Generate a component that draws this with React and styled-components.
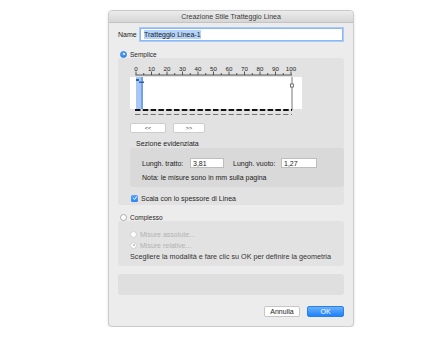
import styled, { createGlobalStyle } from 'styled-components';

const GlobalStyle = createGlobalStyle`
    body {
        margin: 0;
        background: #ffffff;
        font-family: "Liberation Sans", Arial, sans-serif;
        color: #222;
    }
`

const Page = styled.div`
    padding: 10px 0 0 108px;
`
const Dialog = styled.div`
    width: 246px;
    height: 317px;
    box-sizing: border-box;
    background-color: #ececec;
    border: 1px solid #cbcbcb;
    border-radius: 4px;
    box-shadow: 0 1px 3px rgba(0, 0, 0, 0.12);
    display: flex;
    flex-direction: column;
    overflow: hidden;
`
const TitleBar = styled.div`
    height: 12px;
    flex-shrink: 0;
    box-sizing: border-box;
    background: linear-gradient(#ececec, #d6d6d6);
    border-bottom: 1px solid #c2c2c2;
    display: flex;
    align-items: center;
    justify-content: center;
    font-size: 7px;
    color: #3a3a3a;
`
const Body = styled.div`
    flex: 1;
    padding: 5px 9px 0 9px;
    display: flex;
    flex-direction: column;
`
const NameRow = styled.div`
    height: 13px;
    display: flex;
    align-items: center;
    font-size: 7px;
`
const NameLabel = styled.span`
    width: 22px;
`
const NameInput = styled.div`
    width: 203px;
    height: 13px;
    box-sizing: border-box;
    background: #fff;
    border: 1px solid #8ab8f4;
    box-shadow: 0 0 0 1px #a9cbf6;
    display: flex;
    align-items: center;
    padding-left: 3px;
    font-size: 7px;
`
const Selected = styled.span`
    background: #b4d3fb;
    padding: 1px 0;
`
const OptionRow = styled.div`
    height: 8px;
    display: flex;
    align-items: center;
    gap: 3px;
    margin-top: ${props => props.$top || 0}px;
    margin-left: ${props => props.$left || 0}px;
    font-size: ${props => props.$size || 7}px;
    color: ${props => props.$disabled ? '#b2b2b2' : '#262626'};
`
const Radio = styled.span`
    width: 7px;
    height: 7px;
    box-sizing: border-box;
    border-radius: 50%;
    flex-shrink: 0;
    display: flex;
    align-items: center;
    justify-content: center;
    background: ${props => props.$on ? 'linear-gradient(#5aa5fb, #2d86f5)' : '#fff'};
    border: 1px solid ${props => props.$on ? '#2f7fe0' : props.$disabled ? '#cfcfcf' : '#a9a9a9'};
    &::after {
        content: '';
        display: ${props => props.$dot ? 'block' : 'none'};
        width: 2px;
        height: 2px;
        border-radius: 50%;
        background: ${props => props.$on ? '#fff' : '#b8b8b8'};
    }
`
const CheckBox = styled.span`
    width: 7px;
    height: 7px;
    border-radius: 1.5px;
    background: linear-gradient(#5aa5fb, #2d86f5);
    display: flex;
    align-items: center;
    justify-content: center;
    flex-shrink: 0;
`
const Panel = styled.div`
    background-color: ${props => props.$tone || '#e2e2e2'};
    border-radius: 3px;
    display: flex;
    flex-direction: column;
    margin-top: ${props => props.$top || 0}px;
    margin-left: ${props => props.$left || 0}px;
    height: ${props => props.$height}px;
    box-sizing: border-box;
    padding: ${props => props.$pad || '0'};
`
const Preview = styled.svg`
    display: block;
    margin-left: 12px;
`
const ArrowRow = styled.div`
    display: flex;
    gap: 7px;
    margin: 7px 0 0 12px;
`
const SmallButton = styled.div`
    width: ${props => props.$w}px;
    height: 10px;
    box-sizing: border-box;
    background: #fff;
    border: 1px solid #cdcdcd;
    border-radius: 2px;
    display: flex;
    align-items: center;
    justify-content: center;
    font-size: 5.5px;
    color: #333;
`
const SectionTitle = styled.div`
    height: 8px;
    line-height: 8px;
    margin: 7px 0 0 18px;
    font-size: 7px;
`
const FieldRow = styled.div`
    display: flex;
    align-items: center;
    height: 10px;
    font-size: 7px;
`
const FieldLabel = styled.span`
    width: 48px;
    margin-left: ${props => props.$left || 0}px;
`
const Field = styled.div`
    width: ${props => props.$w}px;
    height: 10px;
    box-sizing: border-box;
    background: #fff;
    border: 1px solid #bdbdbd;
    font-size: 7px;
    display: flex;
    align-items: center;
    padding-left: 2px;
`
const Note = styled.div`
    height: 8px;
    line-height: 8px;
    margin-top: 6px;
    font-size: 7px;
`
const Hint = styled.div`
    height: 8px;
    line-height: 8px;
    margin-top: 4px;
    font-size: 7.2px;
    color: #333;
`
const Footer = styled.div`
    display: flex;
    justify-content: flex-end;
    gap: 7px;
    margin-top: 11px;
`
const DialogButton = styled.div`
    width: ${props => props.$w}px;
    height: 11px;
    box-sizing: border-box;
    border-radius: 2px;
    display: flex;
    align-items: center;
    justify-content: center;
    font-size: 7px;
    background: ${props => props.$primary ? 'linear-gradient(#69b1fb, #1c82fa)' : '#fff'};
    color: ${props => props.$primary ? '#fff' : '#222'};
    border: 1px solid ${props => props.$primary ? '#2a80ea' : '#c6c6c6'};
`

const labels = [0, 10, 20, 30, 40, 50, 60, 70, 80, 90, 100];

function DashPreview() {
    const step = 15.5;
    const ticks = [];
    for (let i = 0; i <= 20; i++) {
        const x = 6 + i * step / 2;
        const major = i % 2 === 0;
        ticks.push(<line key={i} x1={x} x2={x} y1={major ? 7.5 : 9} y2={11} stroke="#333" strokeWidth="0.8" />);
    }
    return (
        <Preview width="172" height="52" viewBox="0 0 172 52">
            {labels.map((n, i) => (
                <text key={n} x={6 + i * step} y="6.5" fontSize="6.2" textAnchor="middle" fill="#222"
                    fontFamily="Liberation Sans, Arial, sans-serif">{n}</text>
            ))}
            <line x1="5.5" x2="162" y1="11" y2="11" stroke="#333" strokeWidth="0.8" />
            {ticks}
            <rect x="0" y="13" width="172" height="32" fill="#fff" />
            <rect x="6" y="13" width="7" height="32" fill="#aac7f3" />
            <line x1="12" x2="12" y1="13" y2="45" stroke="#3b7de4" strokeWidth="1" />
            <rect x="6" y="15" width="3" height="2" fill="#2b62ad" />
            <rect x="9" y="17.5" width="5" height="1.5" fill="#2b62ad" />
            <line x1="162" x2="162" y1="13" y2="46" stroke="#555" strokeWidth="0.8" />
            <rect x="160.5" y="20" width="3" height="3" fill="#fff" stroke="#444" strokeWidth="0.7" />
            <line x1="5" x2="162" y1="46" y2="46" stroke="#111" strokeWidth="2" strokeDasharray="5.5 2.3" />
            <line x1="5" x2="162" y1="50.5" y2="50.5" stroke="#555" strokeWidth="0.8" strokeDasharray="5.2 2.6" />
        </Preview>
    )
}

function App() {
    return (
        <Page>
            <GlobalStyle />
            <Dialog>
                <TitleBar>Creazione Stile Tratteggio Linea</TitleBar>
                <Body>
                    <NameRow>
                        <NameLabel>Name</NameLabel>
                        <NameInput><Selected>Tratteggio Linea-1</Selected></NameInput>
                    </NameRow>
                    <OptionRow $top={9} $left={2} $size={6.5}>
                        <Radio $on $dot />
                        Semplice
                    </OptionRow>
                    <Panel $height={147} $pad="6px 0 3px 0">
                        <DashPreview />
                        <ArrowRow>
                            <SmallButton $w={36}>&lt;&lt;</SmallButton>
                            <SmallButton $w={32}>&gt;&gt;</SmallButton>
                        </ArrowRow>
                        <SectionTitle>Sezione evidenziata</SectionTitle>
                        <Panel $tone="#d9d9d9" $left={12} $height={39} $pad="10px 0 5px 12px">
                            <FieldRow>
                                <FieldLabel>Lungh. tratto:</FieldLabel>
                                <Field $w={34}>3,81</Field>
                                <FieldLabel $left={9}>Lungh. vuoto:</FieldLabel>
                                <Field $w={36}>1,27</Field>
                            </FieldRow>
                            <Note>Nota: le misure sono in mm sulla pagina</Note>
                        </Panel>
                        <OptionRow $top={7} $left={13}>
                            <CheckBox>
                                <svg width="6" height="6" viewBox="0 0 6 6">
                                    <path d="M1.2 3.1 L2.5 4.4 L4.9 1.4" fill="none" stroke="#fff" strokeWidth="1" />
                                </svg>
                            </CheckBox>
                            Scala con lo spessore di Linea
                        </OptionRow>
                    </Panel>
                    <OptionRow $top={8} $left={2} $size={6.5}>
                        <Radio />
                        Complesso
                    </OptionRow>
                    <Panel $height={45} $pad="9px 0 5px 12px">
                        <OptionRow $disabled>
                            <Radio $disabled />
                            Misure assolute...
                        </OptionRow>
                        <OptionRow $top={3} $disabled>
                            <Radio $disabled $dot />
                            Misure relative...
                        </OptionRow>
                        <Hint>Scegliere la modalità e fare clic su OK per definire la geometria</Hint>
                    </Panel>
                    <Panel $top={8} $height={21} $tone="#dfdfdf" />
                    <Footer>
                        <DialogButton $w={36}>Annulla</DialogButton>
                        <DialogButton $w={37} $primary>OK</DialogButton>
                    </Footer>
                </Body>
            </Dialog>
        </Page>
    )
}

export default App;
